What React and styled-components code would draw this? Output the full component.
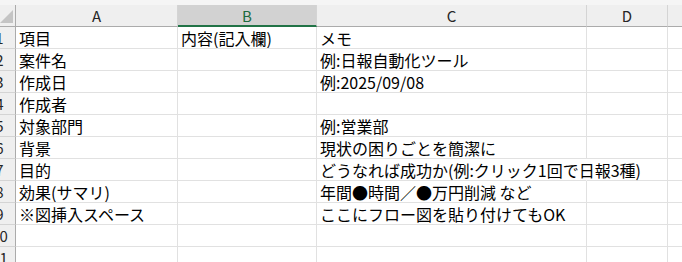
import React from "react";
import styled, { createGlobalStyle, css } from "styled-components";

const GlobalStyle = createGlobalStyle`
  html, body {
    margin: 0;
    padding: 0;
    background: #ffffff;
    overflow: hidden;
  }
`;

const COLUMNS = "32px 162px 139px 270px 81px 81px";
const FONT = `"Noto Sans CJK JP", "Liberation Sans", sans-serif`;

const columnLetters = ["A", "B", "C", "D", "E"];
const selectedColumn = "B";

const rows = [
  { a: "項目", b: "内容(記入欄)", c: "メモ" },
  { a: "案件名", c: "例:日報自動化ツール" },
  { a: "作成日", c: "例:2025/09/08" },
  { a: "作成者" },
  { a: "対象部門", c: "例:営業部" },
  { a: "背景", c: "現状の困りごとを簡潔に" },
  { a: "目的", c: "どうなれば成功か(例:クリック1回で日報3種)", spill: true },
  { a: "効果(サマリ)", c: "年間●時間／●万円削減 など" },
  { a: "※図挿入スペース", c: "ここにフロー図を貼り付けてもOK" },
  {},
  {},
];

const Sheet = styled.div`
  margin-left: -16px;
  font-family: ${FONT};
  color: #000000;
`;

const TopStrip = styled.div`
  height: 5px;
  background: #f5f5f5;
`;

const HeaderRow = styled.div`
  display: grid;
  grid-template-columns: ${COLUMNS};
  height: 22px;
  background: #efefef;
`;

const Corner = styled.div`
  position: relative;
  border-right: 1px solid #ababab;
  border-bottom: 1px solid #ababab;

  &::after {
    content: "";
    position: absolute;
    right: 2px;
    bottom: 3px;
    width: 0;
    height: 0;
    border-left: 13px solid transparent;
    border-bottom: 13px solid #c4c4c4;
  }
`;

const ColumnHead = styled.div`
  display: flex;
  align-items: center;
  justify-content: center;
  font-size: 15px;
  line-height: 1;
  color: #262626;
  border-right: 1px solid #d4d4d4;
  border-bottom: 1px solid #ababab;

  ${(p) =>
    p.$selected &&
    css`
      background: #d2d2d2;
      color: #1d6b3f;
      border-bottom: 2px solid #217346;
    `}
`;

const Row = styled.div`
  display: grid;
  grid-template-columns: ${COLUMNS};
  height: 22px;
  ${(p) =>
    p.$frozen &&
    css`
      & > * {
        border-bottom-color: #a0a0a0;
      }
    `}
`;

const RowHead = styled.div`
  display: flex;
  align-items: center;
  justify-content: center;
  font-size: 15px;
  line-height: 1;
  color: #262626;
  background: #efefef;
  border-right: 1px solid #ababab;
  border-bottom: 1px solid #d4d4d4;
`;

const Cell = styled.div`
  display: flex;
  align-items: flex-end;
  padding: 0 0 0 3px;
  font-size: 16px;
  line-height: 20px;
  white-space: nowrap;
  overflow: hidden;
  border-right: 1px solid #e1e1e1;
  border-bottom: 1px solid #e1e1e1;

  ${(p) =>
    p.$spill &&
    css`
      overflow: visible;
      position: relative;
      z-index: 1;
      border-right-color: transparent;
    `}
`;

const App = () => {
  return (
    <>
      <GlobalStyle />
      <Sheet>
        <TopStrip />
        <HeaderRow>
          <Corner />
          {columnLetters.map((letter) => (
            <ColumnHead key={letter} $selected={letter === selectedColumn}>
              {letter}
            </ColumnHead>
          ))}
        </HeaderRow>
        {rows.map((row, i) => (
          <Row key={i} $frozen={i === 0}>
            <RowHead>{i + 1}</RowHead>
            <Cell>{row.a}</Cell>
            <Cell>{row.b}</Cell>
            <Cell $spill={row.spill}>{row.c}</Cell>
            <Cell />
            <Cell />
          </Row>
        ))}
      </Sheet>
    </>
  );
};

export default App;
